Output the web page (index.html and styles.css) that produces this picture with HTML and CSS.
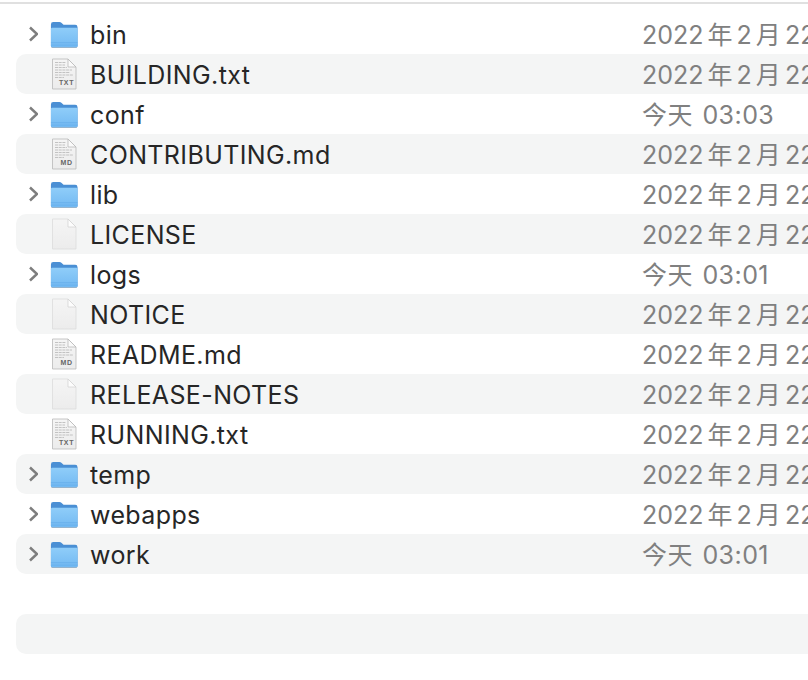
FILE: index.html
```html
<!DOCTYPE html>
<html lang="zh">
<head>
<meta charset="utf-8">
<title>Finder</title>
<link rel="stylesheet" href="styles.css">
</head>
<body>
<svg class="defs" width="0" height="0" aria-hidden="true">
  <defs>
    <linearGradient id="fb" x1="0" y1="0" x2="0" y2="1"><stop offset="0" stop-color="#8fcdf9"/><stop offset="1" stop-color="#72b9f2"/></linearGradient>
    <linearGradient id="pg" x1="0" y1="0" x2="0" y2="1"><stop offset="0" stop-color="#f5f5f5"/><stop offset="1" stop-color="#ececec"/></linearGradient>
    <symbol id="chev" viewBox="0 0 12 18"><path d="M4 2.500 11 9 4 15.500" fill="none" stroke="#7e7e7e" stroke-width="2.500"/></symbol>
    <symbol id="folder" viewBox="0 0 30 28" preserveAspectRatio="none">
      <path d="M1 26V3.500Q1 1 3.500 1H10Q11.500 1 12.500 2L14.500 4H27Q29.500 4 29.500 6.500V26Q29.500 27.500 28 27.500H2.500Q1 27.500 1 26Z" fill="#4a8fd4"/>
      <path d="M1 26V8.500Q1 7 2.500 7H28Q29.500 7 29.500 8.500V26Q29.500 27.500 28 27.500H2.500Q1 27.500 1 26Z" fill="url(#fb)"/>
      <path d="M1 22.500H29.500M1 25H29.500" stroke="#62aae8" stroke-width=".7"/>
      <path d="M1.500 28H29" stroke="#a4a4a4" stroke-width=".9"/>
    </symbol>
    <symbol id="blank" viewBox="0 0 26 32" preserveAspectRatio="none">
      <path d="M1.500 1H17L25 9V31H1.500Z" fill="url(#pg)" stroke="#dcdcdc" stroke-width=".8"/>
      <path d="M17 1V9H25Z" fill="#fdfdfd" stroke="#d4d4d4" stroke-width=".8"/>
    </symbol>
    <symbol id="doc" viewBox="0 0 26 32" preserveAspectRatio="none">
      <path d="M1.500 1H17L25 9V31H1.500Z" fill="url(#pg)" stroke="#b9b9b9" stroke-width=".8"/>
      <path d="M17 1V9H25Z" fill="#fafafa" stroke="#b9b9b9" stroke-width=".8"/>
      <path d="M4 4.500H15M4 7H14M4 9.500H16M4 12H21M4 14.500H19M4 17H22M4 19.500H13" stroke="#bcbcbc" stroke-width=".9" stroke-dasharray="3 .7"/>
    </symbol>
  </defs>
</svg>
<main class="list">
  <div class="row"><svg class="chev"><use href="#chev"/></svg><svg class="folder"><use href="#folder"/></svg><span class="name">bin</span><span class="date">2022 年 2 月 22 日</span></div>
  <div class="row alt"><span class="doc"><svg class="page"><use href="#doc"/></svg><span class="tag">TXT</span></span><span class="name">BUILDING.txt</span><span class="date">2022 年 2 月 22 日</span></div>
  <div class="row"><svg class="chev"><use href="#chev"/></svg><svg class="folder"><use href="#folder"/></svg><span class="name">conf</span><span class="date today">今天 03:03</span></div>
  <div class="row alt"><span class="doc"><svg class="page"><use href="#doc"/></svg><span class="tag">MD</span></span><span class="name">CONTRIBUTING.md</span><span class="date">2022 年 2 月 22 日</span></div>
  <div class="row"><svg class="chev"><use href="#chev"/></svg><svg class="folder"><use href="#folder"/></svg><span class="name">lib</span><span class="date">2022 年 2 月 22 日</span></div>
  <div class="row alt"><span class="doc"><svg class="page"><use href="#blank"/></svg></span><span class="name">LICENSE</span><span class="date">2022 年 2 月 22 日</span></div>
  <div class="row"><svg class="chev"><use href="#chev"/></svg><svg class="folder"><use href="#folder"/></svg><span class="name">logs</span><span class="date today">今天 03:01</span></div>
  <div class="row alt"><span class="doc"><svg class="page"><use href="#blank"/></svg></span><span class="name">NOTICE</span><span class="date">2022 年 2 月 22 日</span></div>
  <div class="row"><span class="doc"><svg class="page"><use href="#doc"/></svg><span class="tag">MD</span></span><span class="name">README.md</span><span class="date">2022 年 2 月 22 日</span></div>
  <div class="row alt"><span class="doc"><svg class="page"><use href="#blank"/></svg></span><span class="name">RELEASE-NOTES</span><span class="date">2022 年 2 月 22 日</span></div>
  <div class="row"><span class="doc"><svg class="page"><use href="#doc"/></svg><span class="tag">TXT</span></span><span class="name">RUNNING.txt</span><span class="date">2022 年 2 月 22 日</span></div>
  <div class="row alt"><svg class="chev"><use href="#chev"/></svg><svg class="folder"><use href="#folder"/></svg><span class="name">temp</span><span class="date">2022 年 2 月 22 日</span></div>
  <div class="row"><svg class="chev"><use href="#chev"/></svg><svg class="folder"><use href="#folder"/></svg><span class="name">webapps</span><span class="date">2022 年 2 月 22 日</span></div>
  <div class="row alt"><svg class="chev"><use href="#chev"/></svg><svg class="folder"><use href="#folder"/></svg><span class="name">work</span><span class="date today">今天 03:01</span></div>
  <div class="row"></div>
  <div class="row alt"></div>
</main>
</body>
</html>
```
FILE: styles.css
```css
* { box-sizing: border-box; }
html, body { margin: 0; height: 100%; overflow: hidden; background: #fff; }
body {
  padding-top: 2px;
  font-family: Inter, "Noto Sans CJK SC", sans-serif;
}
.defs { position: absolute; }
.list {
  border-top: 2px solid #e0e0e0;
  padding: 10px 0 0 16px;
  width: 808px;
}
.row {
  display: flex;
  align-items: center;
  height: 40px;
  padding-left: 10px;
  border-radius: 10px 0 0 10px;
  white-space: nowrap;
  overflow: hidden;
}
.alt { background: #f4f5f5; }
.chev { width: 12px; height: 18px; margin-right: 12px; flex: none; }
.folder { width: 28px; height: 27px; margin-right: 12px; flex: none; filter: blur(.3px); }
.doc { position: relative; width: 26px; height: 32px; margin-left: 25px; margin-right: 13px; flex: none; display: block; }
.page { display: block; width: 26px; height: 32px; filter: blur(.3px); }
.tag {
  position: absolute;
  left: 5px;
  right: 0;
  bottom: 3px;
  font: 700 7px/8px "Liberation Sans", sans-serif;
  letter-spacing: .6px;
  color: #666;
  text-align: center;
}
.name {
  width: 552px;
  flex: none;
  margin-top: 2px;
  font-size: 25px;
  letter-spacing: .38px;
  color: #262626;
}
.date {
  margin-bottom: 2px;
  font-size: 25px;
  color: #808080;
  word-spacing: -3px;
}
.today {
  word-spacing: 2px;
  letter-spacing: .45px;
}
```
